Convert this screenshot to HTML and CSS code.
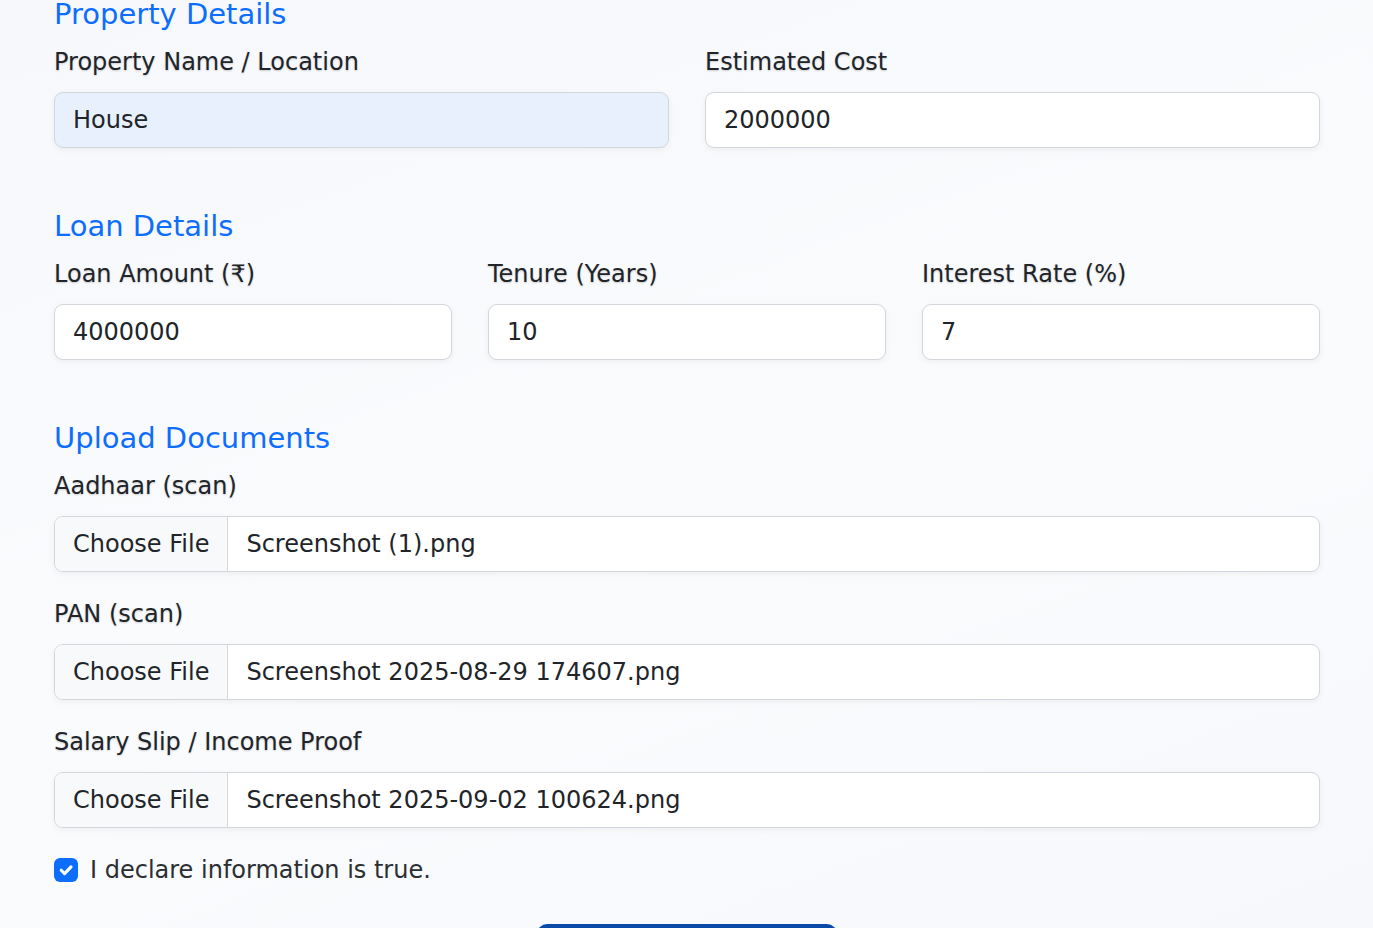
FILE: index.html
```html
<!DOCTYPE html>
<html lang="en">
<head>
<meta charset="utf-8">
<title>Loan Application</title>
<link rel="stylesheet" href="styles.css">
</head>
<body>
<main class="page">
  <form class="form">
    <section class="section">
      <h5 class="section-title">Property Details</h5>
      <div class="row cols-2">
        <div class="field">
          <label class="form-label">Property Name / Location</label>
          <input class="control autofill" type="text" value="House">
        </div>
        <div class="field">
          <label class="form-label">Estimated Cost</label>
          <input class="control" type="text" value="2000000">
        </div>
      </div>
    </section>

    <section class="section">
      <h5 class="section-title">Loan Details</h5>
      <div class="row cols-3">
        <div class="field">
          <label class="form-label">Loan Amount (₹)</label>
          <input class="control" type="text" value="4000000">
        </div>
        <div class="field">
          <label class="form-label">Tenure (Years)</label>
          <input class="control" type="text" value="10">
        </div>
        <div class="field">
          <label class="form-label">Interest Rate (%)</label>
          <input class="control" type="text" value="7">
        </div>
      </div>
    </section>

    <section class="section">
      <h5 class="section-title">Upload Documents</h5>
      <div class="field doc">
        <label class="form-label">Aadhaar (scan)</label>
        <div class="file-control"><span class="file-btn">Choose File</span><span class="file-name">Screenshot (1).png</span></div>
      </div>
      <div class="field doc">
        <label class="form-label">PAN (scan)</label>
        <div class="file-control"><span class="file-btn">Choose File</span><span class="file-name">Screenshot 2025-08-29 174607.png</span></div>
      </div>
      <div class="field doc">
        <label class="form-label">Salary Slip / Income Proof</label>
        <div class="file-control"><span class="file-btn">Choose File</span><span class="file-name">Screenshot 2025-09-02 100624.png</span></div>
      </div>
    </section>

    <div class="form-check">
      <span class="check-box">
        <svg viewBox="0 0 20 20" width="24" height="24"><path d="M6 10.2l2.8 2.8 5.4-5.6" fill="none" stroke="#fff" stroke-width="2.6" stroke-linecap="round" stroke-linejoin="round"/></svg>
      </span>
      <span class="check-label">I declare information is true.</span>
    </div>

    <div class="actions">
      <button type="button" class="submit">Submit Application</button>
    </div>
  </form>
</main>
</body>
</html>
```

FILE: styles.css
```css
* { box-sizing: border-box; }
html, body { margin: 0; padding: 0; }
body {
  font-family: "DejaVu Sans", "Noto Sans", sans-serif;
  font-size: 24px;
  line-height: 1.5;
  color: #212529;
  background: linear-gradient(160deg, #f7f8fb 0%, #fafbfd 55%, #f6f8fb 100%);
  height: 928px;
  overflow: hidden;
}
.page {
  padding: 0 53px 0 54px;
}
.form {
  display: flex;
  flex-direction: column;
  margin-top: -4px;
}
.section { margin-bottom: 24px; }
.section + .section { margin-top: 36px; }
.section-title {
  margin: 0 0 12px;
  font-size: 29px;
  line-height: 36px;
  font-weight: 400;
  color: #0d6efd;
}
.row { display: grid; gap: 36px; }
.cols-2 { grid-template-columns: 1fr 1fr; }
.cols-3 { grid-template-columns: 1fr 1fr 1fr; }
.field { display: flex; flex-direction: column; }
.doc + .doc { margin-top: 24px; }
.form-label {
  display: block;
  margin-bottom: 12px;
  line-height: 36px;
  color: #212529;
  text-shadow: 0 1px 2px rgba(0, 0, 0, 0.18);
}
.control {
  display: block;
  width: 100%;
  height: 56px;
  padding: 0 18px;
  font: inherit;
  color: #212529;
  background: #fff;
  border: 1px solid #d3d7dc;
  border-radius: 9px;
  box-shadow: 0 2px 6px rgba(0, 0, 0, 0.05);
  outline: none;
}
.control.autofill { background: #e8f0fe; }
.file-control {
  display: flex;
  align-items: stretch;
  height: 56px;
  background: #fff;
  border: 1px solid #d3d7dc;
  border-radius: 9px;
  box-shadow: 0 2px 6px rgba(0, 0, 0, 0.05);
  overflow: hidden;
}
.file-btn {
  display: flex;
  align-items: center;
  padding: 0 18px;
  background: #f8f9fa;
  border-right: 1px solid #d3d7dc;
  white-space: nowrap;
}
.file-name {
  display: flex;
  align-items: center;
  padding: 0 18px;
  white-space: nowrap;
}
.form-check {
  display: flex;
  align-items: center;
  gap: 12px;
  height: 36px;
}
.check-box {
  display: flex;
  width: 24px;
  height: 24px;
  border-radius: 6px;
  background: #0d6efd;
}
.check-label { color: #2b2f33; }
.actions {
  display: flex;
  justify-content: center;
  margin-top: 36px;
}
.submit {
  flex: none;
  width: 300px;
  height: 60px;
  border: 0;
  border-radius: 10px;
  background: #0b4ba8;
  color: #fff;
  font: inherit;
}
```
